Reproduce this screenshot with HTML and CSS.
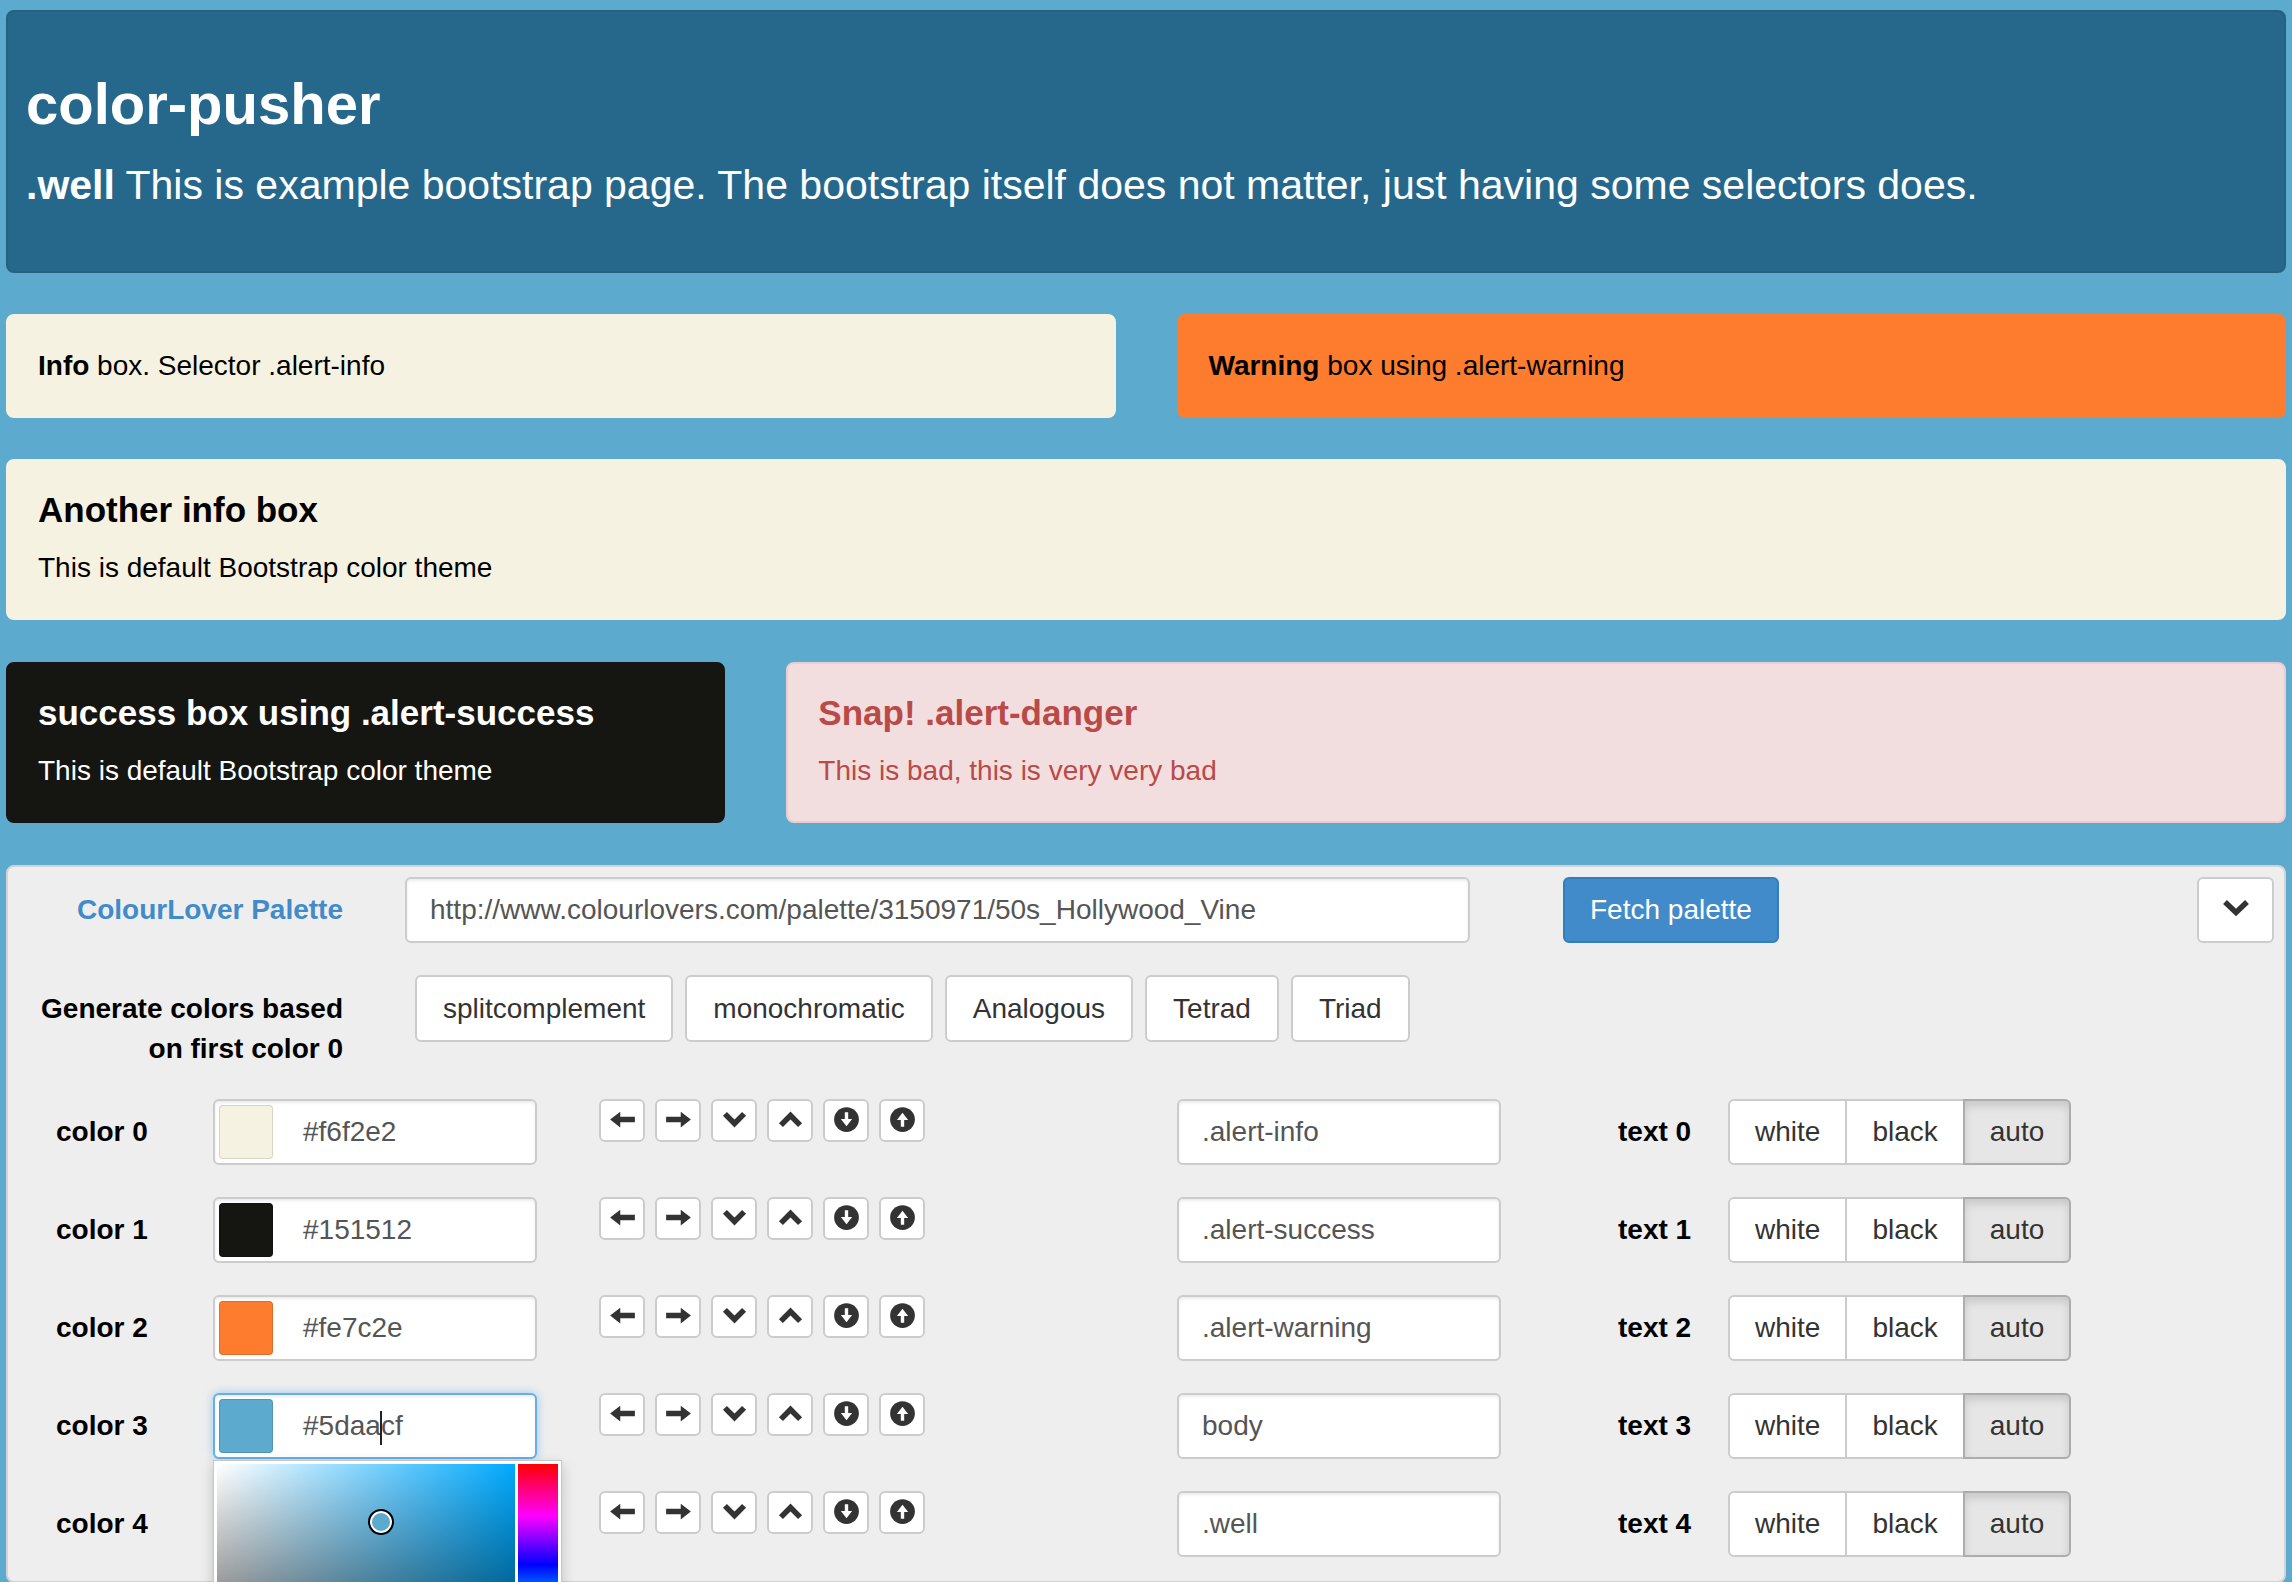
FILE: index.html
```html
<!DOCTYPE html>
<html lang="en">
<head>
<meta charset="utf-8">
<title>color-pusher</title>
<link rel="stylesheet" href="styles.css">
</head>
<body>
<div class="page">
  <div class="well">
    <h1 class="title">color-pusher</h1>
    <p class="lead"><strong>.well</strong> This is example bootstrap page. The bootstrap itself does not matter, just having some selectors does.</p>
  </div>

  <div class="grid2">
    <div class="alert alert-info"><strong>Info</strong> box. Selector .alert-info</div>
    <div class="alert alert-warning"><strong>Warning</strong> box using .alert-warning</div>
  </div>

  <div class="alert alert-info alert-alone">
    <h3>Another info box</h3>
    <p>This is default Bootstrap color theme</p>
  </div>

  <div class="grid3">
    <div class="alert alert-success">
      <h3>success box using .alert-success</h3>
      <p>This is default Bootstrap color theme</p>
    </div>
    <div class="alert alert-danger span2">
      <h3>Snap! .alert-danger</h3>
      <p>This is bad, this is very very bad</p>
    </div>
  </div>

  <div class="panel">
    <div class="form-row">
      <div class="side-label link">ColourLover Palette</div>
      <div class="field url">http://www.colourlovers.com/palette/3150971/50s_Hollywood_Vine</div>
      <button class="btn btn-primary">Fetch palette</button>
      <button class="btn btn-toggle" aria-label="toggle">
        <svg width="28" height="18" viewBox="0 0 28 18"><path d="M3 3 L14 13.5 L25 3" fill="none" stroke="#333" stroke-width="5.5"/></svg>
      </button>
    </div>

    <div class="form-row gen-row">
      <div class="side-label gen-label">Generate colors based on first color 0</div>
      <div class="btn-list">
        <button class="btn">splitcomplement</button>
        <button class="btn">monochromatic</button>
        <button class="btn">Analogous</button>
        <button class="btn">Tetrad</button>
        <button class="btn">Triad</button>
      </div>
    </div>

    <div class="form-row color-row">
      <div class="color-label">color 0</div>
      <div class="field color-field"><span class="swatch sw0"></span><span class="hex">#f6f2e2</span></div>
      <div class="arrows">
        <button class="arrow-btn"><svg class="ico" viewBox="0 0 24 24"><path d="M1 12 L10 5 V9.5 H23 V14.5 H10 V19 Z"/></svg></button>
        <button class="arrow-btn"><svg class="ico" viewBox="0 0 24 24"><path d="M23 12 L14 5 V9.5 H1 V14.5 H14 V19 Z"/></svg></button>
        <button class="arrow-btn"><svg class="ico" viewBox="0 0 24 24"><path d="M3.5 7 L12 15.5 L20.5 7" fill="none" stroke="#333" stroke-width="5"/></svg></button>
        <button class="arrow-btn"><svg class="ico" viewBox="0 0 24 24"><path d="M3.5 17 L12 8.5 L20.5 17" fill="none" stroke="#333" stroke-width="5"/></svg></button>
        <button class="arrow-btn"><svg class="ico" viewBox="0 0 24 24"><circle cx="12" cy="12" r="11"/><path d="M10.5 5.5 H13.5 V11.5 H17 L12 18 L7 11.5 H10.5 Z" fill="#fff"/></svg></button>
        <button class="arrow-btn"><svg class="ico" viewBox="0 0 24 24"><circle cx="12" cy="12" r="11"/><path d="M10.5 18.5 H13.5 V12.5 H17 L12 6 L7 12.5 H10.5 Z" fill="#fff"/></svg></button>
      </div>
      <div class="field selector">.alert-info</div>
      <div class="text-label">text 0</div>
      <div class="btn-group"><button class="btn">white</button><button class="btn">black</button><button class="btn active">auto</button></div>
    </div>

    <div class="form-row color-row">
      <div class="color-label">color 1</div>
      <div class="field color-field"><span class="swatch sw1"></span><span class="hex">#151512</span></div>
      <div class="arrows">
        <button class="arrow-btn"><svg class="ico" viewBox="0 0 24 24"><path d="M1 12 L10 5 V9.5 H23 V14.5 H10 V19 Z"/></svg></button>
        <button class="arrow-btn"><svg class="ico" viewBox="0 0 24 24"><path d="M23 12 L14 5 V9.5 H1 V14.5 H14 V19 Z"/></svg></button>
        <button class="arrow-btn"><svg class="ico" viewBox="0 0 24 24"><path d="M3.5 7 L12 15.5 L20.5 7" fill="none" stroke="#333" stroke-width="5"/></svg></button>
        <button class="arrow-btn"><svg class="ico" viewBox="0 0 24 24"><path d="M3.5 17 L12 8.5 L20.5 17" fill="none" stroke="#333" stroke-width="5"/></svg></button>
        <button class="arrow-btn"><svg class="ico" viewBox="0 0 24 24"><circle cx="12" cy="12" r="11"/><path d="M10.5 5.5 H13.5 V11.5 H17 L12 18 L7 11.5 H10.5 Z" fill="#fff"/></svg></button>
        <button class="arrow-btn"><svg class="ico" viewBox="0 0 24 24"><circle cx="12" cy="12" r="11"/><path d="M10.5 18.5 H13.5 V12.5 H17 L12 6 L7 12.5 H10.5 Z" fill="#fff"/></svg></button>
      </div>
      <div class="field selector">.alert-success</div>
      <div class="text-label">text 1</div>
      <div class="btn-group"><button class="btn">white</button><button class="btn">black</button><button class="btn active">auto</button></div>
    </div>

    <div class="form-row color-row">
      <div class="color-label">color 2</div>
      <div class="field color-field"><span class="swatch sw2"></span><span class="hex">#fe7c2e</span></div>
      <div class="arrows">
        <button class="arrow-btn"><svg class="ico" viewBox="0 0 24 24"><path d="M1 12 L10 5 V9.5 H23 V14.5 H10 V19 Z"/></svg></button>
        <button class="arrow-btn"><svg class="ico" viewBox="0 0 24 24"><path d="M23 12 L14 5 V9.5 H1 V14.5 H14 V19 Z"/></svg></button>
        <button class="arrow-btn"><svg class="ico" viewBox="0 0 24 24"><path d="M3.5 7 L12 15.5 L20.5 7" fill="none" stroke="#333" stroke-width="5"/></svg></button>
        <button class="arrow-btn"><svg class="ico" viewBox="0 0 24 24"><path d="M3.5 17 L12 8.5 L20.5 17" fill="none" stroke="#333" stroke-width="5"/></svg></button>
        <button class="arrow-btn"><svg class="ico" viewBox="0 0 24 24"><circle cx="12" cy="12" r="11"/><path d="M10.5 5.5 H13.5 V11.5 H17 L12 18 L7 11.5 H10.5 Z" fill="#fff"/></svg></button>
        <button class="arrow-btn"><svg class="ico" viewBox="0 0 24 24"><circle cx="12" cy="12" r="11"/><path d="M10.5 18.5 H13.5 V12.5 H17 L12 6 L7 12.5 H10.5 Z" fill="#fff"/></svg></button>
      </div>
      <div class="field selector">.alert-warning</div>
      <div class="text-label">text 2</div>
      <div class="btn-group"><button class="btn">white</button><button class="btn">black</button><button class="btn active">auto</button></div>
    </div>

    <div class="form-row color-row">
      <div class="color-label">color 3</div>
      <div class="field color-field focus"><span class="swatch sw3"></span><span class="hex">#5daa<span class="caret"></span>cf</span>
        <div class="picker">
          <div class="sat"><span class="marker"></span></div>
          <div class="hue"></div>
        </div>
      </div>
      <div class="arrows">
        <button class="arrow-btn"><svg class="ico" viewBox="0 0 24 24"><path d="M1 12 L10 5 V9.5 H23 V14.5 H10 V19 Z"/></svg></button>
        <button class="arrow-btn"><svg class="ico" viewBox="0 0 24 24"><path d="M23 12 L14 5 V9.5 H1 V14.5 H14 V19 Z"/></svg></button>
        <button class="arrow-btn"><svg class="ico" viewBox="0 0 24 24"><path d="M3.5 7 L12 15.5 L20.5 7" fill="none" stroke="#333" stroke-width="5"/></svg></button>
        <button class="arrow-btn"><svg class="ico" viewBox="0 0 24 24"><path d="M3.5 17 L12 8.5 L20.5 17" fill="none" stroke="#333" stroke-width="5"/></svg></button>
        <button class="arrow-btn"><svg class="ico" viewBox="0 0 24 24"><circle cx="12" cy="12" r="11"/><path d="M10.5 5.5 H13.5 V11.5 H17 L12 18 L7 11.5 H10.5 Z" fill="#fff"/></svg></button>
        <button class="arrow-btn"><svg class="ico" viewBox="0 0 24 24"><circle cx="12" cy="12" r="11"/><path d="M10.5 18.5 H13.5 V12.5 H17 L12 6 L7 12.5 H10.5 Z" fill="#fff"/></svg></button>
      </div>
      <div class="field selector">body</div>
      <div class="text-label">text 3</div>
      <div class="btn-group"><button class="btn">white</button><button class="btn">black</button><button class="btn active">auto</button></div>
    </div>

    <div class="form-row color-row last">
      <div class="color-label">color 4</div>
      <div class="field color-field"><span class="swatch sw4"></span><span class="hex">#26688b</span></div>
      <div class="arrows">
        <button class="arrow-btn"><svg class="ico" viewBox="0 0 24 24"><path d="M1 12 L10 5 V9.5 H23 V14.5 H10 V19 Z"/></svg></button>
        <button class="arrow-btn"><svg class="ico" viewBox="0 0 24 24"><path d="M23 12 L14 5 V9.5 H1 V14.5 H14 V19 Z"/></svg></button>
        <button class="arrow-btn"><svg class="ico" viewBox="0 0 24 24"><path d="M3.5 7 L12 15.5 L20.5 7" fill="none" stroke="#333" stroke-width="5"/></svg></button>
        <button class="arrow-btn"><svg class="ico" viewBox="0 0 24 24"><path d="M3.5 17 L12 8.5 L20.5 17" fill="none" stroke="#333" stroke-width="5"/></svg></button>
        <button class="arrow-btn"><svg class="ico" viewBox="0 0 24 24"><circle cx="12" cy="12" r="11"/><path d="M10.5 5.5 H13.5 V11.5 H17 L12 18 L7 11.5 H10.5 Z" fill="#fff"/></svg></button>
        <button class="arrow-btn"><svg class="ico" viewBox="0 0 24 24"><circle cx="12" cy="12" r="11"/><path d="M10.5 18.5 H13.5 V12.5 H17 L12 6 L7 12.5 H10.5 Z" fill="#fff"/></svg></button>
      </div>
      <div class="field selector">.well</div>
      <div class="text-label">text 4</div>
      <div class="btn-group"><button class="btn">white</button><button class="btn">black</button><button class="btn active">auto</button></div>
    </div>
  </div>
</div>
</body>
</html>
```

FILE: styles.css
```css
* { box-sizing: border-box; }

body {
  margin: 0;
  background: #5daacf;
  font-family: "Liberation Sans", Arial, sans-serif;
  font-size: 28px;
  line-height: 40px;
  color: #000;
}

.page { padding: 10px 6px 0; }

/* well */
.well {
  background: #26688b;
  border: 2px solid #24627f;
  border-radius: 8px;
  padding: 38px 18px;
  margin-bottom: 41px;
  color: #fff;
}
.title {
  margin: 22px 0 20px;
  font-size: 58px;
  line-height: 64px;
  font-weight: bold;
}
.lead {
  margin: 0 0 18px;
  font-size: 41px;
  line-height: 59px;
}

/* grids */
.grid2 {
  display: grid;
  grid-template-columns: 1fr 1fr;
  column-gap: 61px;
  margin-bottom: 41px;
}
.grid3 {
  display: grid;
  grid-template-columns: repeat(3, 1fr);
  column-gap: 61px;
  margin-bottom: 42px;
}
.span2 { grid-column: span 2; }

/* alerts */
.alert {
  border: 2px solid transparent;
  border-radius: 8px;
  padding: 30px;
}
.alert h3 {
  margin: 0 0 19px;
  font-size: 35px;
  line-height: 38px;
  font-weight: bold;
}
.alert p { margin: 0; }
.alert-alone { margin-bottom: 42px; }
.alert-info { background: #f6f2e2; border-color: #f6f2e2; color: #000; }
.alert-warning { background: #fe7c2e; border-color: #fe7c2e; color: #000; }
.alert-success { background: #151512; border-color: #151512; color: #fff; }
.alert-danger { background: #f2dede; border-color: #ebccd1; color: #b94a48; }

/* panel */
.panel {
  background: #eeeeee;
  border: 2px solid #d3d3d3;
  border-radius: 8px;
  padding: 10px 10px 24px;
}
.form-row {
  display: flex;
  align-items: center;
  margin-bottom: 32px;
}
.form-row.last { margin-bottom: 0; }

.side-label {
  width: 325px;
  flex: none;
  text-align: right;
  font-weight: bold;
}
.link { color: #428bca; }

.field {
  flex: none;
  height: 66px;
  background: #fff;
  border: 2px solid #cccccc;
  border-radius: 6px;
  box-shadow: inset 0 2px 3px rgba(0, 0, 0, 0.08);
  padding: 0 23px;
  line-height: 62px;
  color: #555;
  white-space: nowrap;
}
.url { width: 1065px; margin-left: 62px; }

.btn {
  font: inherit;
  height: 66px;
  line-height: 62px;
  padding: 0 25px;
  border: 2px solid #cccccc;
  border-radius: 6px;
  background: #fff;
  color: #333;
  white-space: nowrap;
  flex: none;
}
.btn-primary {
  background: #428bca;
  border-color: #357ebd;
  color: #fff;
  margin-left: 93px;
}
.btn-toggle {
  margin-left: auto;
  width: 77px;
  padding: 0 0 4px;
  display: flex;
  align-items: center;
  justify-content: center;
}

/* generate row */
.gen-row { align-items: flex-start; margin-bottom: 30px; }
.gen-label { padding: 14px 0 0 15px; }
.btn-list {
  display: flex;
  gap: 12px;
  margin-left: 72px;
}
.btn-list .btn { height: 67px; line-height: 63px; padding: 0 26px; }

/* color rows */
.color-label {
  width: 195px;
  flex: none;
  padding-left: 38px;
  font-weight: bold;
}
.color-field {
  width: 324px;
  display: flex;
  align-items: center;
  padding: 0 4px;
  position: relative;
}
.swatch {
  width: 54px;
  height: 54px;
  border-radius: 4px;
  border: 1px solid rgba(0, 0, 0, 0.12);
  flex: none;
}
.sw0 { background: #f6f2e2; }
.sw1 { background: #151512; }
.sw2 { background: #fe7c2e; }
.sw3 { background: #5daacf; }
.sw4 { background: #26688b; }
.hex { margin-left: 30px; }
.caret {
  display: inline-block;
  width: 2px;
  height: 34px;
  margin: 0 -1px;
  background: #222;
  vertical-align: middle;
}
.focus {
  border-color: #66afe9;
  box-shadow: inset 0 2px 3px rgba(0, 0, 0, 0.08), 0 0 10px rgba(102, 175, 233, 0.6);
}

.arrows {
  display: flex;
  gap: 10px;
  margin-left: 62px;
  align-self: flex-start;
  flex: none;
}
.arrow-btn {
  width: 46px;
  height: 43px;
  border: 2px solid #cccccc;
  border-radius: 6px;
  background: #fff;
  padding: 0 0 3px;
  display: flex;
  align-items: center;
  justify-content: center;
}
.ico { width: 27px; height: 27px; fill: #333; }

.selector { width: 324px; margin-left: 252px; }
.text-label {
  width: 76px;
  flex: none;
  margin-left: 117px;
  font-weight: bold;
}
.btn-group { display: flex; margin-left: 34px; flex: none; }
.btn-group .btn { padding: 0 25px; border-radius: 0; margin-left: -2px; }
.btn-group .btn:first-child { border-radius: 6px 0 0 6px; margin-left: 0; }
.btn-group .btn:last-child { border-radius: 0 6px 6px 0; }
.btn-group .active {
  background: #e6e6e6;
  border-color: #adadad;
  box-shadow: inset 0 5px 8px rgba(0, 0, 0, 0.13);
}

/* colour picker popup */
.picker {
  position: absolute;
  top: calc(100% + 3px);
  left: -2px;
  display: flex;
  gap: 3px;
  padding: 3px;
  background: #fff;
  border: 1px solid #c8c8c8;
  box-shadow: 0 5px 12px rgba(0, 0, 0, 0.2);
  z-index: 5;
}
.sat {
  position: relative;
  width: 298px;
  height: 305px;
  background:
    linear-gradient(to top, #000, rgba(0, 0, 0, 0)),
    linear-gradient(to right, #fff, hsl(200, 100%, 50%));
}
.marker {
  position: absolute;
  left: 164px;
  top: 58px;
  width: 26px;
  height: 26px;
  margin: -13px 0 0 -13px;
  border-radius: 50%;
  border: 2px solid #000;
  box-shadow: inset 0 0 0 2px #fff;
  background: #5daacf;
}
.hue {
  width: 40px;
  height: 305px;
  background: linear-gradient(to bottom, #f00 0%, #f0f 17%, #00f 33%, #0ff 50%, #0f0 67%, #ff0 83%, #f00 100%);
}
```
